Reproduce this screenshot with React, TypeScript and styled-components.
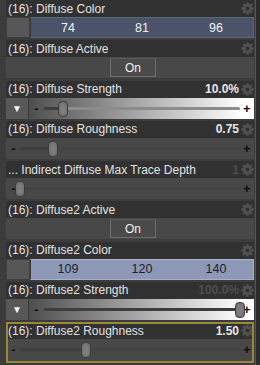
import React from "react"
import styled, { createGlobalStyle } from "styled-components"

const Global = createGlobalStyle`
  html, body { margin: 0; padding: 0; background: #3c3c3c; }
  body { font-family: "Liberation Sans", Arial, sans-serif; }
`

const Panel = styled.div`
  display: flex;
  width: 260px;
  height: 365px;
  background: #3c3c3c;
  overflow: hidden;
`

const List = styled.div`
  flex: 1;
  display: flex;
  flex-direction: column;
  gap: 2.25px;
  padding-left: 6px;
  min-width: 0;
`

const Scrollbar = styled.div`
  width: 4px;
  margin-left: 1px;
  background: #2c2c2c;
  border-left: 1px solid #555;
`

const Block = styled.div<{ $selected?: boolean }>`
  display: flex;
  flex-direction: column;
  outline: ${p => (p.$selected ? "2px solid #9a8738" : "none")};
  outline-offset: -2px;
  padding-bottom: ${p => (p.$selected ? "3px" : "0")};
  background: ${p => (p.$selected ? "#484848" : "transparent")};
`

const Header = styled.div`
  display: flex;
  align-items: center;
  height: 17px;
  background: #313131;
  padding-left: 2px;
  font-size: 12px;
  color: #e2e2e2;
`

const Label = styled.span`
  flex: 1;
  overflow: hidden;
  white-space: nowrap;
`

const Value = styled.span<{ $faint?: boolean }>`
  font-size: 12px;
  font-weight: bold;
  color: ${p => (p.$faint ? "#4e4e4e" : "#e6e6e6")};
  margin-right: 1px;
`

const GearWrap = styled.span`
  display: flex;
  width: 14px;
  justify-content: center;
`

const Body = styled.div<{ $center?: boolean }>`
  display: flex;
  height: 21px;
  background: #484848;
  justify-content: ${p => (p.$center ? "center" : "flex-start")};
  align-items: stretch;
`

const Swatch = styled.div`
  width: 22px;
  background: #575757;
  border: 1px solid #3f3f3f;
`

const ColorBar = styled.div<{ $light?: boolean }>`
  flex: 1;
  display: grid;
  grid-template-columns: 1fr 1fr 1fr;
  align-items: center;
  background: ${p => (p.$light ? "#8d99b7" : "#4a5367")};
  border: 1px solid ${p => (p.$light ? "#a9b2c8" : "#5e6679")};
  border-left-color: #3a3a3a;
  color: ${p => (p.$light ? "#1c2030" : "#f2f2f2")};
  font-size: 12.5px;
  text-align: center;
`

const OnButton = styled.div`
  align-self: center;
  width: 44px;
  height: 17px;
  margin-left: 6px;
  display: flex;
  align-items: center;
  justify-content: center;
  background: #4a4a4a;
  border: 1px solid #6e6e6e;
  border-top-color: #5a5a5a;
  color: #f0f0f0;
  font-size: 12px;
`

const ArrowButton = styled.div`
  width: 22px;
  display: flex;
  align-items: center;
  justify-content: center;
  background: #585858;
  border-right: 1px solid #3a3a3a;
  color: #f4f4f4;
  font-size: 10px;
`

const SliderArea = styled.div<{ $bright?: boolean }>`
  flex: 1;
  display: flex;
  align-items: center;
  padding: 0 4px 0 4px;
  background: ${p => (p.$bright ? "linear-gradient(to right, #4e4e4e, #ffffff 95%)" : "#484848")};
`

const Sign = styled.span`
  width: 7px;
  color: #0c0c0c;
  font-size: 13px;
  font-weight: bold;
  text-align: center;
  line-height: 1;
`

const Track = styled.div`
  flex: 1;
  position: relative;
  height: 15px;
  margin: 0 3px;
`

const Line = styled.div<{ $bright?: boolean }>`
  position: absolute;
  left: 0;
  right: 0;
  top: 6px;
  height: 3px;
  border-radius: 2px;
  background: ${p => (p.$bright ? "#8c8c8c" : "#444444")};
`

const Filled = styled.div`
  position: absolute;
  left: 0;
  top: 6px;
  height: 3px;
  border-radius: 2px;
  background: #3e3e3e;
`

const Knob = styled.div`
  position: absolute;
  top: 0;
  width: 8px;
  height: 14px;
  border-radius: 4px;
  transform: translateX(-50%);
  background: radial-gradient(ellipse at center, #7e7e7e 30%, #6a6a6a 100%);
  border: 1px solid #3c3c3c;
`

const Gear = () => (
  <GearWrap>
    <svg width="13" height="13" viewBox="0 0 16 16">
      <g fill="#525252">
        {[0, 45, 90, 135, 180, 225, 270, 315].map(a => (
          <rect key={a} x="6.5" y="0.5" width="3" height="4" transform={`rotate(${a} 8 8)`} />
        ))}
        <circle cx="8" cy="8" r="5.5" />
      </g>
      <circle cx="8" cy="8" r="2.4" fill="#313131" />
    </svg>
  </GearWrap>
)

const Slider = (props: { pct: number; bright?: boolean; arrow?: boolean }) => (
  <Body>
    {props.arrow && <ArrowButton>▼</ArrowButton>}
    <SliderArea $bright={props.bright}>
      <Sign>-</Sign>
      <Track>
        <Line $bright={props.bright} />
        <Filled style={{ width: `${props.pct}%` }} />
        <Knob style={{ left: `${props.pct}%` }} />
      </Track>
      <Sign>+</Sign>
    </SliderArea>
  </Body>
)

const Head = (props: { label: string; value?: string; faint?: boolean }) => (
  <Header>
    <Label>{props.label}</Label>
    {props.value && <Value $faint={props.faint}>{props.value}</Value>}
    <Gear />
  </Header>
)

const ColorRow = (props: { values: number[]; light?: boolean }) => (
  <Body>
    <Swatch />
    <ColorBar $light={props.light}>
      {props.values.map((v, i) => (
        <span key={i}>{v}</span>
      ))}
    </ColorBar>
  </Body>
)

const OnRow = () => (
  <Body $center>
    <OnButton>On</OnButton>
  </Body>
)

export default function App() {
  return (
    <Panel>
      <Global />
      <List>
        <Block>
          <Head label="(16): Diffuse Color" />
          <ColorRow values={[74, 81, 96]} />
        </Block>
        <Block>
          <Head label="(16): Diffuse Active" />
          <OnRow />
        </Block>
        <Block>
          <Head label="(16): Diffuse Strength" value="10.0%" />
          <Slider pct={10} bright arrow />
        </Block>
        <Block>
          <Head label="(16): Diffuse Roughness" value="0.75" />
          <Slider pct={15} />
        </Block>
        <Block>
          <Head label="... Indirect Diffuse Max Trace Depth" value="1" faint />
          <Slider pct={0} />
        </Block>
        <Block>
          <Head label="(16): Diffuse2 Active" />
          <OnRow />
        </Block>
        <Block>
          <Head label="(16): Diffuse2 Color" />
          <ColorRow values={[109, 120, 140]} light />
        </Block>
        <Block>
          <Head label="(16): Diffuse2 Strength" value="100.0%" faint />
          <Slider pct={100} bright arrow />
        </Block>
        <Block $selected>
          <Head label="(16): Diffuse2 Roughness" value="1.50" />
          <Slider pct={30} />
        </Block>
      </List>
      <Scrollbar />
    </Panel>
  )
}
